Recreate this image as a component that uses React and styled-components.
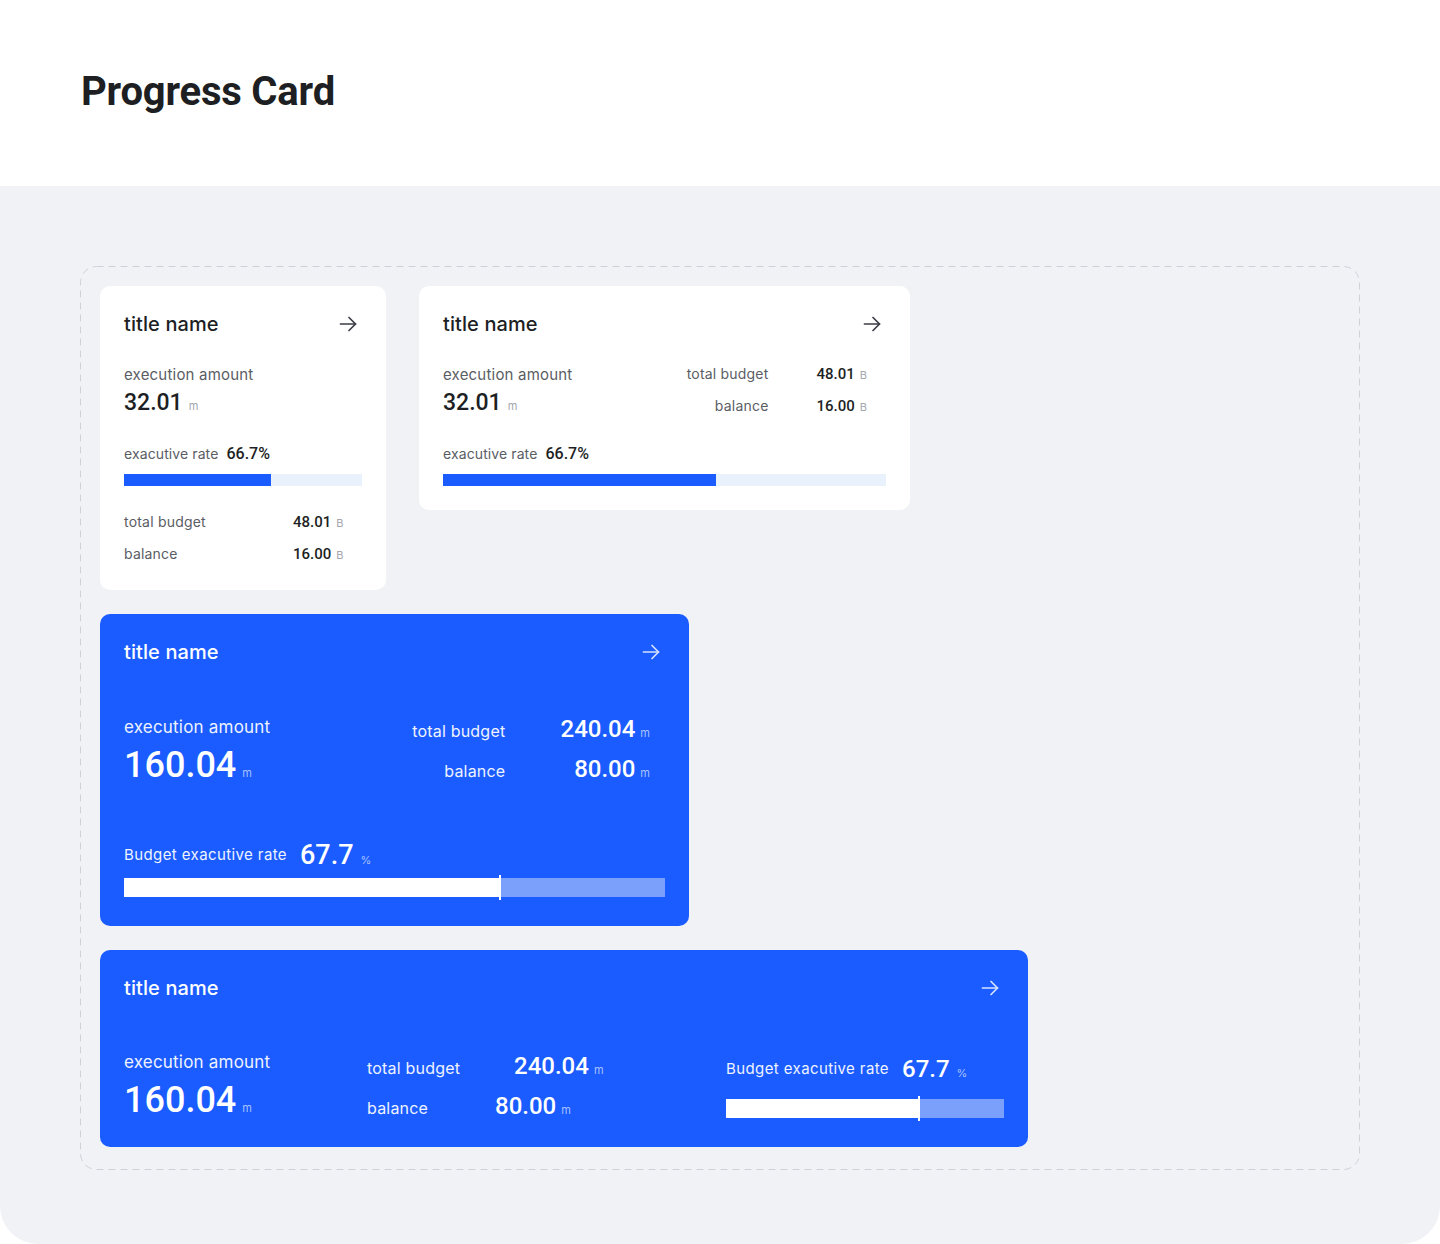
import React from "react";
import styled, { createGlobalStyle, css } from "styled-components";

const GlobalStyle = createGlobalStyle`
  html, body { margin: 0; padding: 0; background: #ffffff; }
  body { font-family: Inter, "Noto Sans", sans-serif; -webkit-font-smoothing: antialiased; }
  * { box-sizing: border-box; }
`;

const BLUE = "#1a5cff";

const Page = styled.div`
  width: 1440px;
  min-height: 1244px;
  display: flex;
  flex-direction: column;
`;

const Header = styled.header`
  height: 186px;
  padding: 66px 0 0 81px;
  background: #fff;
`;

const PageTitle = styled.h1`
  margin: 0;
  font-family: Roboto, "Liberation Sans", sans-serif;
  font-weight: 700;
  font-size: 40px;
  line-height: 52px;
  color: #1d1f23;
  letter-spacing: -0.2px;
`;

const Stage = styled.main`
  flex: 1;
  background: #f1f2f6;
  border-radius: 0 0 38px 38px;
  padding: 80px 80px 74px;
`;

const Frame = styled.section`
  position: relative;
  border-radius: 16px;
  padding: 20px 20px 23px;
  display: flex;
  flex-direction: column;
  align-items: flex-start;
  gap: 24px;
`;

const FrameOutline = styled.svg`
  position: absolute;
  inset: 0;
  width: 100%;
  height: 100%;
  overflow: visible;
  pointer-events: none;
`;

const Row = styled.div`
  display: flex;
  align-items: flex-start;
  gap: 33px;
`;

const Card = styled.article`
  position: relative;
  width: ${(p) => p.$w}px;
  height: ${(p) => p.$h}px;
  border-radius: 10px;
  padding: 24px 24px 0;
  background: ${(p) => (p.$blue ? BLUE : "#fff")};
  color: ${(p) => (p.$blue ? "#fff" : "#1d1f24")};
  display: flex;
  flex-direction: column;
`;

const TitleRow = styled.div`
  display: flex;
  align-items: center;
  justify-content: space-between;
  height: 28px;
`;

const CardTitle = styled.h2`
  margin: 0;
  font-size: 20px;
  font-weight: 500;
  line-height: 28px;
  letter-spacing: 0.1px;
`;

const ArrowIcon = styled.svg`
  width: 18px;
  height: 16px;
  margin-right: 5px;
  stroke: ${(p) => (p.$blue ? "#d5e2ff" : "#3a3d44")};
`;

const Arrow = ({ blue }) => (
  <ArrowIcon $blue={blue} viewBox="0 0 18 16" fill="none" strokeWidth="1.7" strokeLinecap="round" strokeLinejoin="round">
    <path d="M1.5 8h15" />
    <path d="M10 1.5 16.5 8 10 14.5" />
  </ArrowIcon>
);

const Label = styled.div`
  font-size: ${(p) => p.$size || 15}px;
  line-height: ${(p) => p.$lh || 20}px;
  color: ${(p) => (p.$blue ? "#eef3ff" : "#5a5d64")};
  white-space: nowrap;
  letter-spacing: ${(p) => (p.$ls != null ? p.$ls : 0.2)}px;
  text-align: ${(p) => p.$align || "left"};
`;

const Amount = styled.div`
  display: flex;
  align-items: baseline;
  gap: ${(p) => p.$gap || 6}px;
  white-space: nowrap;
`;

const Num = styled.span`
  font-family: Roboto, "Liberation Sans", sans-serif;
  font-size: ${(p) => p.$size}px;
  font-weight: ${(p) => p.$weight || 500};
  line-height: ${(p) => p.$lh || 30}px;
  color: ${(p) => (p.$blue ? "#fff" : "#1d1f24")};
`;

const Unit = styled.span`
  font-size: 11px;
  line-height: 12px;
  color: ${(p) => (p.$blue ? "#a8c1ff" : "#a3a6ad")};
  ${(p) => p.$ml && css`margin-left: ${p.$ml}px;`}
`;

const Section = styled.div`
  margin-top: ${(p) => p.$mt || 0}px;
  display: flex;
  flex-direction: column;
  gap: ${(p) => p.$gap || 0}px;
`;

const RateLine = styled.div`
  display: flex;
  align-items: ${(p) => (p.$center ? "center" : "baseline")};
  gap: ${(p) => p.$gap || 8}px;
  white-space: nowrap;
`;

const LightBar = styled.div`
  height: 12px;
  background: #e9f1fd;
`;

const LightFill = styled.div`
  height: 100%;
  background: ${BLUE};
`;

const WhiteBar = styled.div`
  height: 19px;
  background: #7aa0fb;
`;

const WhiteFill = styled.div`
  height: 100%;
  background: #fff;
  position: relative;
  &::after {
    content: "";
    position: absolute;
    right: -1px;
    top: -3px;
    bottom: -3px;
    width: 2px;
    background: #fff;
  }
`;

const KV = styled.div`
  display: grid;
  grid-template-columns: ${(p) => p.$cols};
  row-gap: ${(p) => p.$rowGap}px;
  align-items: baseline;
  margin: ${(p) => p.$margin || 0};
`;

const Val = styled.div`
  display: flex;
  align-items: baseline;
  gap: 5px;
  justify-content: ${(p) => p.$justify || "flex-start"};
  ${(p) => p.$ml && css`margin-left: ${p.$ml}px;`}
`;

const Split = styled.div`
  display: flex;
  justify-content: space-between;
  align-items: flex-start;
  margin-top: ${(p) => p.$mt || 0}px;
`;

const Grid3 = styled.div`
  display: grid;
  grid-template-columns: 243px 1fr 278px;
  align-items: start;
  margin-top: ${(p) => p.$mt}px;
`;

function SmallKV() {
  return (
    <KV $cols="169px auto" $rowGap={12}>
      <Label $size={14}>total budget</Label>
      <Val>
        <Num $size={15} $lh={20}>48.01</Num>
        <Unit>B</Unit>
      </Val>
      <Label $size={14}>balance</Label>
      <Val>
        <Num $size={15} $lh={20}>16.00</Num>
        <Unit>B</Unit>
      </Val>
    </KV>
  );
}

function SmallRate({ fill }) {
  return (
    <Section $mt={26} $gap={10}>
      <RateLine $gap={8}>
        <Label $size={14} $ls={0.1}>exacutive rate</Label>
        <Num $size={16} $lh={20}>66.7%</Num>
      </RateLine>
      <LightBar>
        <LightFill style={{ width: fill }} />
      </LightBar>
    </Section>
  );
}

function SmallExec() {
  return (
    <Section $gap={3}>
      <Label>execution amount</Label>
      <Amount>
        <Num $size={23}>32.01</Num>
        <Unit>m</Unit>
      </Amount>
    </Section>
  );
}

function BigExec() {
  return (
    <Section $gap={8}>
      <Label $size={17} $blue>execution amount</Label>
      <Amount $gap={6}>
        <Num $size={36} $lh={40} $blue>160.04</Num>
        <Unit $blue>m</Unit>
      </Amount>
    </Section>
  );
}

function BlueRate({ size, fill, gap }) {
  return (
    <>
      <RateLine $gap={13} $center>
        <Label $size={15} $lh={28} $ls={0.4} $blue>Budget exacutive rate</Label>
        <Amount $gap={7}>
          <Num $size={size} $lh={28} $blue>67.7</Num>
          <Unit $blue>%</Unit>
        </Amount>
      </RateLine>
      <WhiteBar style={{ marginTop: gap }}>
        <WhiteFill style={{ width: fill }} />
      </WhiteBar>
    </>
  );
}

export default function App() {
  return (
    <>
      <GlobalStyle />
      <Page>
        <Header>
          <PageTitle>Progress Card</PageTitle>
        </Header>
        <Stage>
          <Frame>
            <FrameOutline aria-hidden="true">
              <rect x="0.5" y="0.5" width="100%" height="100%" rx="16" fill="none" stroke="#cfd1d9" strokeWidth="1" strokeDasharray="7 5" style={{ width: "calc(100% - 1px)", height: "calc(100% - 1px)" }} />
            </FrameOutline>
            <Row>
              <Card $w={286} $h={304}>
                <TitleRow>
                  <CardTitle>title name</CardTitle>
                  <Arrow />
                </TitleRow>
                <Section $mt={27}>
                  <SmallExec />
                </Section>
                <SmallRate fill="61.8%" />
                <Section $mt={26}>
                  <SmallKV />
                </Section>
              </Card>

              <Card $w={491} $h={224}>
                <TitleRow>
                  <CardTitle>title name</CardTitle>
                  <Arrow />
                </TitleRow>
                <Split $mt={27}>
                  <SmallExec />
                  <KV $cols="auto 48px auto" $rowGap={12} $margin="-1px 19px 0 0">
                    <Label $size={14} $align="right">total budget</Label>
                    <span />
                    <Val>
                      <Num $size={15} $lh={20}>48.01</Num>
                      <Unit>B</Unit>
                    </Val>
                    <Label $size={14} $align="right">balance</Label>
                    <span />
                    <Val>
                      <Num $size={15} $lh={20}>16.00</Num>
                      <Unit>B</Unit>
                    </Val>
                  </KV>
                </Split>
                <SmallRate fill="61.6%" />
              </Card>
            </Row>

            <Card $w={589} $h={312} $blue>
              <TitleRow>
                <CardTitle>title name</CardTitle>
                <Arrow blue />
              </TitleRow>
              <Split $mt={51}>
                <BigExec />
                <KV $cols="auto 130px auto" $rowGap={10} $margin="-2px 15px 0 0">
                  <Label $size={16} $lh={28} $blue $align="right">total budget</Label>
                  <Val $justify="flex-end">
                    <Num $size={24} $lh={28} $blue>240.04</Num>
                  </Val>
                  <Unit $blue $ml={5}>m</Unit>
                  <Label $size={16} $lh={28} $blue $align="right">balance</Label>
                  <Val $justify="flex-end">
                    <Num $size={24} $lh={28} $blue>80.00</Num>
                  </Val>
                  <Unit $blue $ml={5}>m</Unit>
                </KV>
              </Split>
              <Section $mt={56}>
                <BlueRate size={27} fill="69.5%" gap={9} />
              </Section>
            </Card>

            <Card $w={928} $h={197} $blue>
              <TitleRow>
                <CardTitle>title name</CardTitle>
                <Arrow blue />
              </TitleRow>
              <Grid3 $mt={50}>
                <BigExec />
                <KV $cols="128px auto" $rowGap={10} $margin="0">
                  <Label $size={16} $lh={28} $blue>total budget</Label>
                  <Val $ml={19}>
                    <Num $size={24} $lh={28} $blue>240.04</Num>
                    <Unit $blue>m</Unit>
                  </Val>
                  <Label $size={16} $lh={28} $blue>balance</Label>
                  <Val>
                    <Num $size={24} $lh={28} $blue>80.00</Num>
                    <Unit $blue>m</Unit>
                  </Val>
                </KV>
                <Section $mt={3}>
                  <BlueRate size={24} fill="69.4%" gap={16} />
                </Section>
              </Grid3>
            </Card>
          </Frame>
        </Stage>
      </Page>
    </>
  );
}
